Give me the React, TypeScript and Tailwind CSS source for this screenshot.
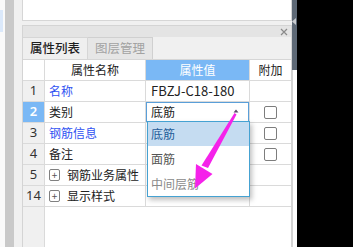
import React from "react";

const cols = "grid grid-cols-[22px_101px_104px_41px]";
const cell = "border-r border-[#dadada] flex items-center";

function Checkbox() {
  return <span className="block w-[13px] h-[13px] rounded-[2px] border border-[#7d7d7d] bg-white" />;
}

function PlusBox() {
  return (
    <span className="flex items-center justify-center w-[11px] h-[12px] rounded-[2px] border border-[#808080] text-[10px] leading-none text-[#555]">
      +
    </span>
  );
}

const rows = [
  { no: "1", name: "名称", link: true, value: "FBZJ-C18-180", check: false },
  { no: "2", name: "类别", link: false, value: "底筋", check: true, active: true },
  { no: "3", name: "钢筋信息", link: true, value: "", check: true },
  { no: "4", name: "备注", link: false, value: "", check: true },
  { no: "5", name: "钢筋业务属性", group: true, value: "", check: false },
  { no: "14", name: "显示样式", group: true, value: "", check: false },
];

export default function App() {
  return (
    <div
      className="relative w-[353px] h-[247px] flex bg-black overflow-hidden text-[12px] text-[#222]"
      style={{ fontFamily: '"Noto Sans CJK SC", "Noto Sans", sans-serif' }}
    >
      {/* left edge */}
      <div className="w-[5px] bg-[#fafafa] pt-[10px]">
        <div className="w-[3px] h-[22px] bg-[#dbe9fb]" />
      </div>
      <div className="w-[9px] bg-[#c9c9c9]" />
      <div className="w-[8px] bg-[#f0f0f0]" />

      {/* main panel */}
      <div className="w-[270px] flex flex-col bg-[#f0f0f0]">
        <div className="h-[21px] bg-white border-x border-b border-[#d6d6d6]" />
        <div className="h-[4px]" />
        <div className="flex-1 flex flex-col border-x border-t border-[#d4d4d4] bg-white">
          <div className="h-[11px] bg-[#e4e4e4] flex items-center justify-end pr-[3px]">
            <svg width="8" height="8" viewBox="0 0 8 8">
              <path d="M1 1L7 7M7 1L1 7" stroke="#8a8a8a" strokeWidth="1.2" />
            </svg>
          </div>
          <div className="h-[23px] flex bg-[#f0f0f0] border-b border-[#d6d6d6]">
            <div className="w-[65px] flex items-center justify-center border-r border-t border-[#d6d6d6] bg-[#efefef] font-medium text-[#1f1f1f] text-[12.5px]">
              属性列表
            </div>
            <div className="w-[65px] flex items-center justify-center border-r border-t border-[#d0d0d0] bg-[#e6e6e6] text-[#a2a2a2] text-[12.5px]">
              图层管理
            </div>
          </div>

          {/* table header */}
          <div className={`${cols} h-[21px] border-b border-[#dadada]`}>
            <div className={`${cell} bg-white`} />
            <div className={`${cell} justify-center`}>属性名称</div>
            <div className={`${cell} justify-center bg-[#7ab8f5] text-white border-[#8cc2f5]`}>属性值</div>
            <div className="flex items-center justify-center">附加</div>
          </div>

          {rows.map((r) => (
            <div key={r.no} className={`${cols} h-[21px] border-b border-[#dadada]`}>
              <div
                className={`${cell} justify-center text-[13px] ${
                  r.active ? "bg-[#7ab8f5] text-white font-semibold" : "bg-[#f0f0f0] text-[#333]"
                }`}
                style={{ fontFamily: '"Noto Sans", sans-serif' }}
              >
                {r.no}
              </div>
              <div className={`${cell} pl-[4px] gap-[7px] ${r.link ? "text-[#3052f2]" : ""}`}>
                {r.group && <PlusBox />}
                {r.name}
              </div>
              <div
                className={`${cell} pl-[5px] justify-between pr-[12px] ${
                  r.active ? "ring-1 ring-inset ring-[#5a9fd9]" : ""
                } ${r.no === "1" ? "text-[13px]" : ""}`}
              >
                {r.value}
              </div>
              <div className="flex items-center justify-center">{r.check && <Checkbox />}</div>
            </div>
          ))}

          <div className={`${cols} flex-1`}>
            <div className={`${cell} bg-[#f0f0f0]`} />
            <div />
            <div />
            <div />
          </div>
        </div>
      </div>

      {/* right scroll strip */}
      <div className="w-[5px] flex flex-col">
        <div className="relative h-[70px] bg-[#5e6976]">
          <svg className="absolute left-0 top-[18px]" width="4" height="7" viewBox="0 0 4 7">
            <path d="M4 0L0 3.5L4 7Z" fill="#c9ccd0" />
          </svg>
        </div>
        <div className="flex-1 bg-white border-l border-[#d4d4d4]" />
      </div>

      {/* dropdown list */}
      <div className="absolute left-[147px] top-[121px] w-[103px] h-[76px] bg-white border border-[#45a2d2] shadow-[2px_3px_5px_rgba(0,0,0,0.25)] flex flex-col">
        <div className="h-[24px] bg-[#c5dcf1] text-[#1f5c9a] flex items-center pl-[3px]">底筋</div>
        <div className="h-[25px] text-[#555] flex items-center pl-[3px]">面筋</div>
        <div className="h-[25px] text-[#8a8a8a] flex items-center pl-[3px]">中间层筋</div>
      </div>

      {/* annotation arrow */}
      <svg className="absolute inset-0 pointer-events-none" width="353" height="247" viewBox="0 0 353 247">
        <path d="M233.5 112.5L236 109.5L238.5 112.5Z" fill="#5a4a6a" />
        <path d="M234.5 113L236.5 114.5L208 168L201.5 165.5Z" fill="#f522ea" />
        <path d="M196 164L212.5 174L195 188.5Z" fill="#f522ea" />
      </svg>
    </div>
  );
}
